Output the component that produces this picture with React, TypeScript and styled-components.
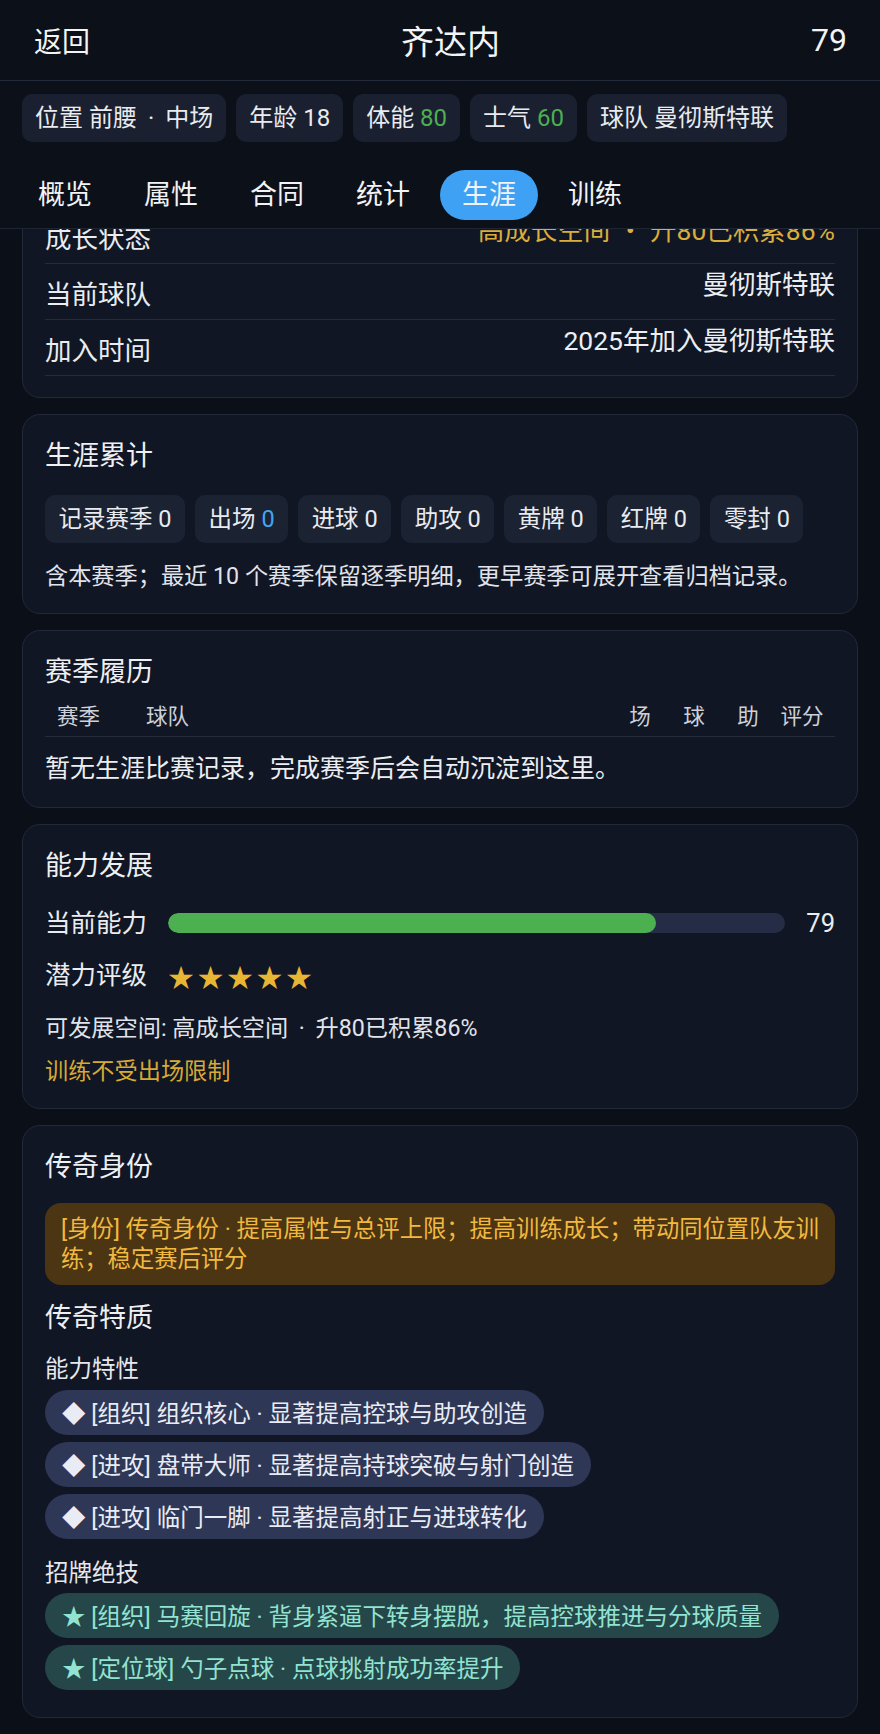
import React from 'react';
import styled, { createGlobalStyle } from 'styled-components';

const GlobalStyle = createGlobalStyle`
  html, body {
    margin: 0;
    padding: 0;
    background: #0b0f18;
  }
  body {
    font-family: Roboto, "Noto Sans CJK SC", "Noto Sans", sans-serif;
    color: #eaecf0;
  }
  * {
    box-sizing: border-box;
  }
`;

const Page = styled.div`
  width: 880px;
  height: 1734px;
  display: flex;
  flex-direction: column;
  overflow: hidden;
  background: #0b0f18;
`;

// sticky top area: nav bar, info chips, tabs
const Header = styled.header`
  flex-shrink: 0;
  background: #0c1019;
  border-bottom: 1px solid #1e2432;
`;

const NavBar = styled.div`
  height: 81px;
  display: flex;
  align-items: center;
  justify-content: space-between;
  padding: 0 33px 0 34px;
  border-bottom: 1px solid #232a39;
`;

const NavText = styled.span<{ $size: number }>`
  font-size: ${(p) => p.$size}px;
  color: #f3f4f6;
`;

const ChipRow = styled.div`
  display: flex;
  flex-wrap: wrap;
  gap: 10px;
  padding: 13px 22px 0;
`;

const Chip = styled.div`
  height: 48px;
  line-height: 48px;
  padding: 0 13px;
  border-radius: 10px;
  background: #1a2030;
  font-size: 24px;
  color: #e9ebef;
  white-space: nowrap;
`;

const Accent = styled.span<{ $color: string }>`
  color: ${(p) => p.$color};
`;

// separator dot with some extra air around it
const Sep = styled.span<{ $wide?: boolean }>`
  font-family: ${(p) => (p.$wide ? '"Noto Sans CJK SC", sans-serif' : 'Roboto, sans-serif')};
  margin: 0 ${(p) => (p.$wide ? 0 : 0.21)}em;
`;

const TabBar = styled.nav`
  display: flex;
  gap: 8px;
  padding: 28px 16px 8px;
`;

const Tab = styled.div<{ $active?: boolean }>`
  height: 50px;
  line-height: 50px;
  padding: 0 22px;
  border-radius: 25px;
  font-size: 27px;
  color: #f1f3f6;
  background: ${(p) => (p.$active ? '#3fa1f3' : 'transparent')};
`;

// content area, shown scrolled a bit under the header
const Scroller = styled.main`
  flex: 1;
  overflow: hidden;
`;

const Feed = styled.div`
  display: flex;
  flex-direction: column;
  gap: 16px;
  padding: 0 22px;
  margin-top: -44px;
`;

const Card = styled.section<{ $pb?: number }>`
  background: #111624;
  border: 1px solid #222939;
  border-radius: 18px;
  padding: 22px 22px ${(p) => p.$pb ?? 20}px;
`;

const SectionTitle = styled.h3<{ $mt?: number; $mb?: number }>`
  margin: ${(p) => p.$mt ?? 0}px 0 ${(p) => p.$mb ?? 0}px;
  font-size: 27px;
  line-height: 38px;
  font-weight: 400;
  color: #eef0f3;
`;

const InfoRow = styled.div`
  display: flex;
  justify-content: space-between;
  align-items: flex-start;
  padding: 3px 0 6px;
  border-bottom: 1px solid #252c3c;
`;

const InfoLabel = styled.span`
  padding-top: 10px;
  font-size: 26.5px;
  line-height: 36px;
`;

const InfoValue = styled.span<{ $color?: string }>`
  font-size: 26.5px;
  line-height: 36px;
  color: ${(p) => p.$color ?? '#eceef2'};
`;

const StatList = styled.div`
  display: flex;
  flex-wrap: wrap;
  gap: 10px;
`;

const StatChip = styled(Chip)`
  background: #1b2232;
  font-size: 23.5px;
  padding: 0 13.5px;
`;

const Note = styled.p<{ $mt: number; $color?: string }>`
  margin: ${(p) => p.$mt}px 0 0;
  font-size: 23.2px;
  line-height: 34px;
  color: ${(p) => p.$color ?? '#e1e4ea'};
`;

const TableHead = styled.div`
  display: grid;
  grid-template-columns: 89px 1fr repeat(4, 54px);
  padding: 5px 6px 4px 12px;
  border-bottom: 1px solid #252c3c;
  font-size: 21.5px;
  line-height: 30px;
  color: #cdd1d8;
`;

const HeadCell = styled.span<{ $center?: boolean }>`
  text-align: ${(p) => (p.$center ? 'center' : 'left')};
`;

const EmptyText = styled.p`
  margin: 14px 0 0;
  font-size: 25px;
  line-height: 36px;
  color: #eceef2;
`;

const MeterRow = styled.div<{ $mt?: number }>`
  display: flex;
  align-items: center;
  gap: 21px;
  height: 36px;
  margin-top: ${(p) => p.$mt ?? 0}px;
`;

const MeterLabel = styled.span`
  font-size: 25.5px;
  line-height: 36px;
  white-space: nowrap;
`;

const Track = styled.div`
  flex: 1;
  height: 20px;
  border-radius: 10px;
  background: #252c45;
  overflow: hidden;
`;

const Fill = styled.div`
  height: 100%;
  border-radius: 10px;
  background: #4caf50;
`;

const Stars = styled.span`
  font-family: "Noto Sans CJK SC", sans-serif;
  font-size: 26px;
  letter-spacing: 3.5px;
  color: #e9b634;
`;

const IdentityBox = styled.div`
  padding: 11px 10px 11px 16px;
  border-radius: 16px;
  background: #4c3512;
  color: #f2b93f;
  font-size: 23.3px;
  line-height: 30px;
`;

const GroupLabel = styled.div<{ $mt: number }>`
  margin-top: ${(p) => p.$mt}px;
  font-size: 23.5px;
  line-height: 34px;
  color: #e6e8ed;
`;

const PillList = styled.div<{ $mt: number }>`
  display: flex;
  flex-direction: column;
  align-items: flex-start;
  gap: 7px;
  margin-top: ${(p) => p.$mt}px;
`;

const Pill = styled.div<{ $kind: 'trait' | 'skill' }>`
  height: 45px;
  line-height: 45px;
  padding: 0 17px;
  border-radius: 23px;
  font-size: 23.5px;
  white-space: nowrap;
  background: ${(p) => (p.$kind === 'trait' ? '#2f3757' : '#25474a')};
  color: ${(p) => (p.$kind === 'trait' ? '#e9ecf4' : '#92e3d1')};
`;

const Mark = styled.span`
  font-family: "Noto Sans CJK SC", sans-serif;
`;

const tabs = ['概览', '属性', '合同', '统计', '生涯', '训练'];

const stats: { label: string; value: number; color?: string }[] = [
  { label: '记录赛季', value: 0 },
  { label: '出场', value: 0, color: '#42a5f5' },
  { label: '进球', value: 0 },
  { label: '助攻', value: 0 },
  { label: '黄牌', value: 0 },
  { label: '红牌', value: 0 },
  { label: '零封', value: 0 },
];

const traits = [
  '[组织] 组织核心 · 显著提高控球与助攻创造',
  '[进攻] 盘带大师 · 显著提高持球突破与射门创造',
  '[进攻] 临门一脚 · 显著提高射正与进球转化',
];

const skills = [
  '[组织] 马赛回旋 · 背身紧逼下转身摆脱，提高控球推进与分球质量',
  '[定位球] 勺子点球 · 点球挑射成功率提升',
];

const ability = 79;

export default function App() {
  return (
    <Page>
      <GlobalStyle />
      <Header>
        <NavBar>
          <NavText $size={28}>返回</NavText>
          <NavText $size={33}>齐达内</NavText>
          <NavText $size={32}>79</NavText>
        </NavBar>
        <ChipRow>
          <Chip>
            位置 前腰 <Sep>·</Sep> 中场
          </Chip>
          <Chip>年龄 18</Chip>
          <Chip>
            体能 <Accent $color="#4caf50">80</Accent>
          </Chip>
          <Chip>
            士气 <Accent $color="#4caf50">60</Accent>
          </Chip>
          <Chip>球队 曼彻斯特联</Chip>
        </ChipRow>
        <TabBar>
          {tabs.map((t) => (
            <Tab key={t} $active={t === '生涯'}>
              {t}
            </Tab>
          ))}
        </TabBar>
      </Header>

      <Scroller>
        <Feed>
          <Card $pb={21}>
            <InfoRow>
              <InfoLabel>成长状态</InfoLabel>
              <InfoValue $color="#d9ae3b">
                高成长空间 <Sep $wide>·</Sep> 升80已积累86%
              </InfoValue>
            </InfoRow>
            <InfoRow>
              <InfoLabel>当前球队</InfoLabel>
              <InfoValue>曼彻斯特联</InfoValue>
            </InfoRow>
            <InfoRow>
              <InfoLabel>加入时间</InfoLabel>
              <InfoValue>2025年加入曼彻斯特联</InfoValue>
            </InfoRow>
          </Card>

          <Card>
            <SectionTitle $mb={20}>生涯累计</SectionTitle>
            <StatList>
              {stats.map((s) => (
                <StatChip key={s.label}>
                  {s.label} {s.color ? <Accent $color={s.color}>{s.value}</Accent> : s.value}
                </StatChip>
              ))}
            </StatList>
            <Note $mt={16}>含本赛季；最近 10 个赛季保留逐季明细，更早赛季可展开查看归档记录。</Note>
          </Card>

          <Card>
            <SectionTitle $mb={6}>赛季履历</SectionTitle>
            <TableHead>
              <HeadCell>赛季</HeadCell>
              <HeadCell>球队</HeadCell>
              <HeadCell $center>场</HeadCell>
              <HeadCell $center>球</HeadCell>
              <HeadCell $center>助</HeadCell>
              <HeadCell $center>评分</HeadCell>
            </TableHead>
            <EmptyText>暂无生涯比赛记录，完成赛季后会自动沉淀到这里。</EmptyText>
          </Card>

          <Card>
            <SectionTitle $mb={20}>能力发展</SectionTitle>
            <MeterRow>
              <MeterLabel>当前能力</MeterLabel>
              <Track>
                <Fill style={{ width: `${ability}%` }} />
              </Track>
              <MeterLabel>{ability}</MeterLabel>
            </MeterRow>
            <MeterRow $mt={16}>
              <MeterLabel>潜力评级</MeterLabel>
              <Stars>★★★★★</Stars>
            </MeterRow>
            <Note $mt={18}>
              可发展空间: 高成长空间 <Sep>·</Sep> 升80已积累86%
            </Note>
            <Note $mt={9} $color="#d6aa33">
              训练不受出场限制
            </Note>
          </Card>

          <Card $pb={27}>
            <SectionTitle $mb={17}>传奇身份</SectionTitle>
            <IdentityBox>
              [身份] 传奇身份 · 提高属性与总评上限；提高训练成长；带动同位置队友训练；稳定赛后评分
            </IdentityBox>
            <SectionTitle $mt={14}>传奇特质</SectionTitle>
            <GroupLabel $mt={15}>能力特性</GroupLabel>
            <PillList $mt={4}>
              {traits.map((t) => (
                <Pill key={t} $kind="trait">
                  <Mark>◆</Mark> {t}
                </Pill>
              ))}
            </PillList>
            <GroupLabel $mt={17}>招牌绝技</GroupLabel>
            <PillList $mt={3}>
              {skills.map((s) => (
                <Pill key={s} $kind="skill">
                  <Mark>★</Mark> {s}
                </Pill>
              ))}
            </PillList>
          </Card>
        </Feed>
      </Scroller>
    </Page>
  );
}
